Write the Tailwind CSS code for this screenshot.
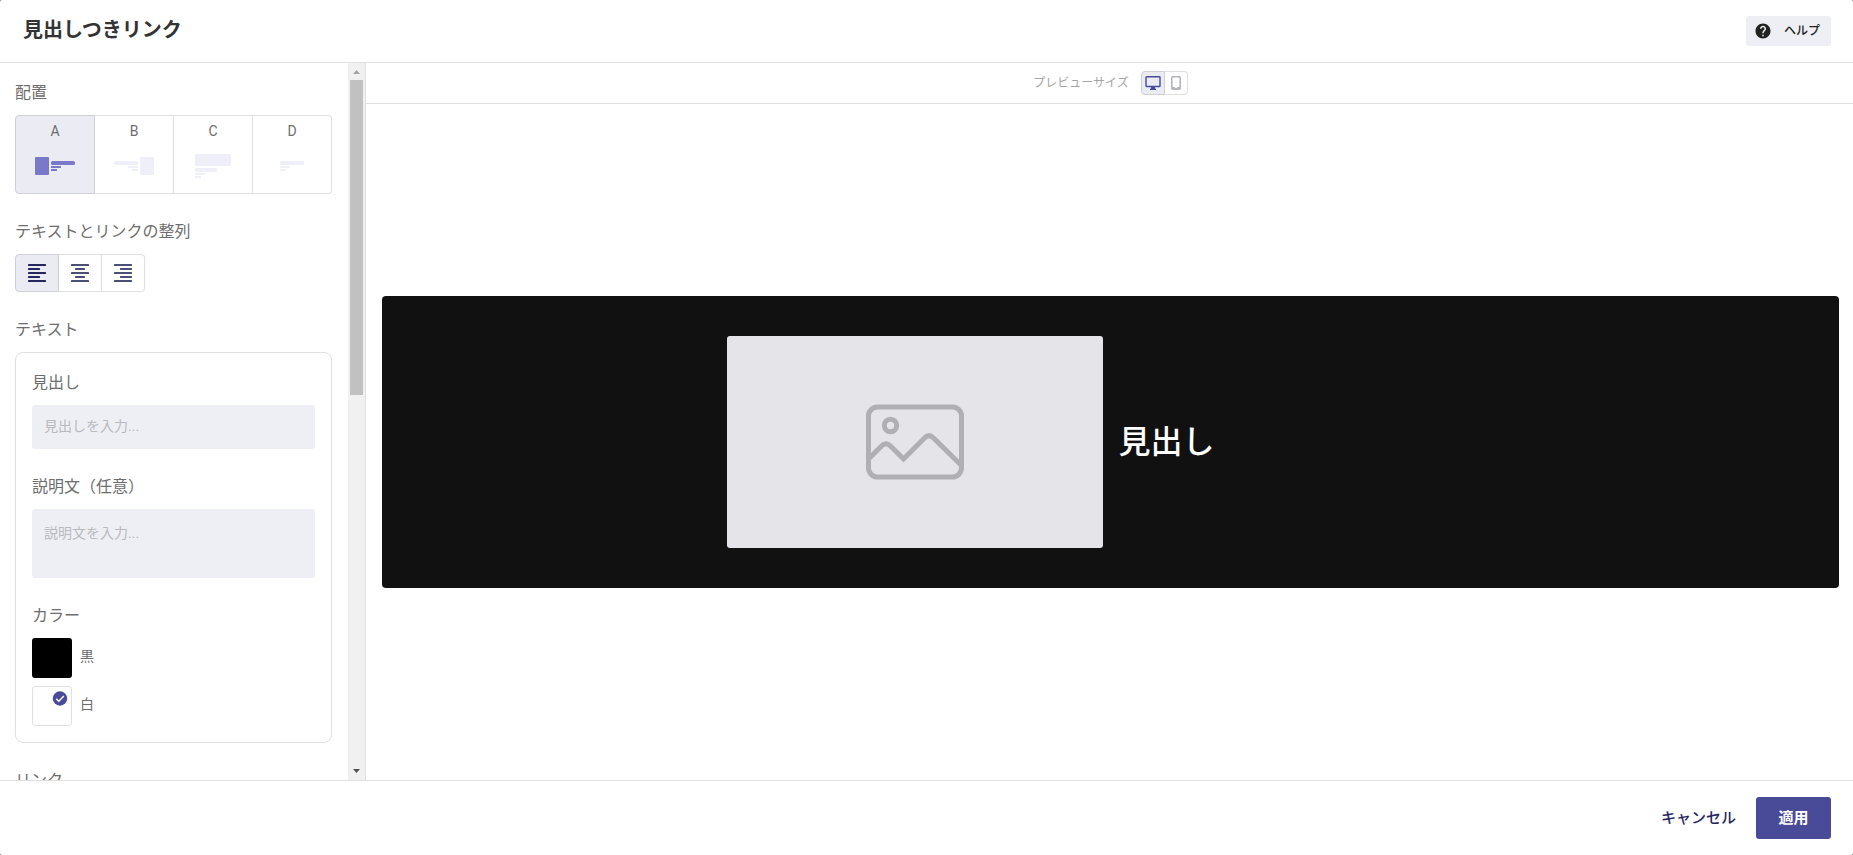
<!DOCTYPE html>
<html lang="ja">
<head>
<meta charset="utf-8">
<title>見出しつきリンク</title>
<script src="https://cdn.jsdelivr.net/npm/@tailwindcss/browser@4"></script>
</head>
<body class="bg-[#777777] font-[Roboto,'Noto_Sans_CJK_JP',sans-serif] text-[#6e6e6e]">
<div class="flex h-screen flex-col overflow-hidden rounded-[2px] bg-white">
  <header class="flex h-[63px] shrink-0 items-center justify-between border-b border-[#e0e0e0] pr-[22px] pl-[23px]">
    <h1 class="pb-[2px] text-xl leading-[30px] font-bold text-[#333333]">見出しつきリンク</h1>
    <button type="button" class="flex h-[30px] items-center gap-3 rounded-[3px] bg-[#eeeff4] pr-[11px] pl-2 text-xs font-medium text-[#222222]">
      <svg class="size-[18px]" viewBox="0 0 24 24" fill="currentColor" aria-hidden="true"><path d="M12 2C6.48 2 2 6.48 2 12s4.480 10 10 10 10-4.480 10-10S17.520 2 12 2zm1 17h-2v-2h2v2zm2.070-7.750l-.9.920C13.450 12.900 13 13.500 13 15h-2v-.5c0-1.100.450-2.100 1.170-2.830l1.240-1.260c.37-.36.590-.86.590-1.410 0-1.100-.9-2-2-2s-2 .9-2 2H8c0-2.210 1.790-4 4-4s4 1.790 4 4c0 .880-.36 1.680-.93 2.250z"/></svg>
      ヘルプ
    </button>
  </header>

  <main class="flex min-h-0 grow">
    <aside class="flex w-[366px] shrink-0 border-r border-[#e0e0e0]">
      <div class="min-w-0 grow overflow-hidden pt-[18px] pr-4 pl-[15px]">
        <section class="mb-[26px]">
          <h2 class="mb-[10px] text-base leading-6">配置</h2>
          <div class="flex h-[79px] text-sm leading-5">
            <button type="button" aria-pressed="true" class="flex grow basis-px flex-col items-center gap-3 rounded-l-[4px] border border-[#cfcfd6] bg-[#ebebf4] pt-[5px]">A
              <svg width="40" height="26" viewBox="0 0 40 26" fill="#7a78c9" aria-hidden="true"><rect y="4" width="14" height="18" rx="1"/><rect x="16" y="8" width="24" height="4" rx="1.5"/><rect x="16" y="13" width="10" height="2" rx=".5"/><rect x="16" y="16" width="6" height="2" rx=".5"/></svg>
            </button>
            <button type="button" aria-pressed="false" class="flex grow basis-px flex-col items-center gap-3 border-y border-r border-[#e0e0e0] pt-[5px]">B
              <svg width="40" height="26" viewBox="0 0 40 26" fill="#efeff9" aria-hidden="true"><rect x="26" y="4" width="14" height="18" rx="1"/><rect y="8" width="24" height="4" rx="1.5"/><rect x="14" y="13" width="10" height="2" rx=".5"/><rect x="18" y="16" width="6" height="2" rx=".5"/></svg>
            </button>
            <button type="button" aria-pressed="false" class="flex grow basis-px flex-col items-center gap-3 border-y border-r border-[#e0e0e0] pt-[5px]">C
              <svg width="36" height="26" viewBox="0 0 36 26" fill="#efeff9" aria-hidden="true"><rect y="1" width="36" height="12" rx="1"/><rect y="15" width="22" height="4" rx="1.5"/><rect y="20" width="10" height="2" rx=".5"/><rect y="23" width="6" height="2" rx=".5"/></svg>
            </button>
            <button type="button" aria-pressed="false" class="flex grow basis-px flex-col items-center gap-3 rounded-r-[4px] border-y border-r border-[#e0e0e0] pt-[5px]">D
              <svg width="24" height="26" viewBox="0 0 24 26" fill="#efeff9" aria-hidden="true"><rect y="8" width="24" height="4" rx="1.5"/><rect y="13" width="10" height="2" rx=".5"/><rect y="16" width="6" height="2" rx=".5"/></svg>
            </button>
          </div>
        </section>

        <section class="mb-[26px]">
          <h2 class="mb-[10px] text-base leading-6">テキストとリンクの整列</h2>
          <div class="flex h-[38px]">
            <button type="button" aria-label="左揃え" aria-pressed="true" class="flex w-11 items-center justify-center rounded-l-[4px] border border-[#cfcfd6] bg-[#ebebf4] text-[#262660]">
              <svg width="18" height="18" viewBox="0 0 18 18" fill="currentColor"><rect width="18" height="2" rx=".5"/><rect y="4" width="12" height="2" rx=".5"/><rect y="8" width="18" height="2" rx=".5"/><rect y="12" width="12" height="2" rx=".5"/><rect y="16" width="18" height="2" rx=".5"/></svg>
            </button>
            <button type="button" aria-label="中央揃え" aria-pressed="false" class="flex w-[43px] items-center justify-center border-y border-r border-[#e0e0e0] text-[#4c5076]">
              <svg width="18" height="18" viewBox="0 0 18 18" fill="currentColor"><rect width="18" height="2" rx=".5"/><rect x="4" y="4" width="10" height="2" rx=".5"/><rect y="8" width="18" height="2" rx=".5"/><rect x="4" y="12" width="10" height="2" rx=".5"/><rect y="16" width="18" height="2" rx=".5"/></svg>
            </button>
            <button type="button" aria-label="右揃え" aria-pressed="false" class="flex w-[43px] items-center justify-center rounded-r-[4px] border-y border-r border-[#e0e0e0] text-[#4c5076]">
              <svg width="18" height="18" viewBox="0 0 18 18" fill="currentColor"><rect width="18" height="2" rx=".5"/><rect x="6" y="4" width="12" height="2" rx=".5"/><rect y="8" width="18" height="2" rx=".5"/><rect x="6" y="12" width="12" height="2" rx=".5"/><rect y="16" width="18" height="2" rx=".5"/></svg>
            </button>
          </div>
        </section>

        <section class="mb-[26px]">
          <h2 class="mb-[10px] text-base leading-6">テキスト</h2>
          <div class="rounded-lg border border-[#e0e0e0] px-4 pt-[18px] pb-4">
            <label for="heading" class="mb-[10px] block text-base leading-6">見出し</label>
            <input id="heading" type="text" placeholder="見出しを入力..." class="mb-[26px] block h-11 w-full rounded-[3px] bg-[#eeeff4] px-3 pb-[2px] text-sm placeholder:text-[#b9b9bd]">
            <label for="description" class="mb-[10px] block text-base leading-6">説明文（任意）</label>
            <textarea id="description" placeholder="説明文を入力..." class="mb-[26px] block h-[69px] w-full resize-none rounded-[3px] bg-[#eeeff4] px-3 py-[14px] text-sm placeholder:text-[#b9b9bd]"></textarea>
            <fieldset>
              <legend class="mb-[10px] text-base leading-6">カラー</legend>
              <div class="flex flex-col gap-2 text-sm">
                <label class="flex items-center gap-2">
                  <input type="radio" name="color" class="size-10 appearance-none rounded-[3px] bg-black">
                  <span class="pb-1">黒</span>
                </label>
                <label class="relative flex items-center gap-2">
                  <input type="radio" name="color" checked class="size-10 appearance-none rounded-[3px] border border-[#e0e0e0] bg-white">
                  <svg class="absolute top-1 left-5 size-4" viewBox="0 0 16 16" aria-hidden="true"><circle cx="8" cy="8.500" r="7.200" fill="#4a4b98"/><path d="M4.200 8.700l2.600 2.600 5.100-5.200" fill="none" stroke="#fff" stroke-width="1.400"/></svg>
                  <span class="pb-1">白</span>
                </label>
              </div>
            </fieldset>
          </div>
        </section>

        <section>
          <h2 class="text-base leading-6">リンク</h2>
        </section>
      </div>
      <div class="flex w-[17px] shrink-0 flex-col items-center bg-[#f1f1f1]" aria-hidden="true">
        <svg class="shrink-0" width="17" height="17" viewBox="0 0 17 17" fill="#a3a3a3"><path d="M5 11h7L8.500 7z"/></svg>
        <div class="h-[315px] w-[13px] shrink-0 bg-[#c1c1c1]"></div>
        <svg class="mt-auto shrink-0" width="17" height="17" viewBox="0 0 17 17" fill="#505050"><path d="M5 6h7l-3.500 4z"/></svg>
      </div>
    </aside>

    <section class="flex min-w-0 grow flex-col">
      <div class="flex h-[41px] shrink-0 items-center justify-center gap-3 border-b border-[#e0e0e0] pl-[2px]">
        <span class="text-xs text-[#a5a5a5]">プレビューサイズ</span>
        <div class="flex h-6">
          <button type="button" aria-label="デスクトップ" aria-pressed="true" class="flex w-6 items-center justify-center rounded-l-[4px] border border-[#cfcfd6] bg-[#ebebf4]">
            <svg width="16" height="14" viewBox="0 0 16 14" aria-hidden="true"><rect x="1" y=".8" width="14" height="9.700" rx=".6" fill="none" stroke="#4a4b98" stroke-width="1.400"/><path d="M6 11h4v1.300l1 .6v1H5v-1l1-.6z" fill="#4a4b98"/></svg>
          </button>
          <button type="button" aria-label="モバイル" aria-pressed="false" class="flex w-[23px] items-center justify-center rounded-r-[4px] border-y border-r border-[#e0e0e0]">
            <svg width="10" height="14" viewBox="0 0 10 14" aria-hidden="true"><rect x=".8" y=".7" width="8.400" height="12.600" rx="1.300" fill="none" stroke="#b5b5b9" stroke-width="1.600"/><path d="M1 11h3v1h2v-1h3v2H1z" fill="#b5b5b9"/></svg>
          </button>
        </div>
      </div>
      <div class="flex grow items-center pr-[14px] pl-4">
        <div class="flex grow justify-center rounded-[4px] bg-[#111111] p-10">
          <div class="grid w-full max-w-3xl grid-cols-2 items-center gap-4">
            <div class="flex h-[212px] items-center justify-center rounded-[3px] bg-[#e5e4e9]">
              <svg width="98" height="76" viewBox="0 0 98 76" fill="none" stroke="#b0afb4" stroke-width="5" aria-hidden="true"><rect x="2.500" y="3" width="93" height="70" rx="9"/><circle cx="24.500" cy="21.500" r="6.200"/><path d="M3 54.500L15.500 42q4.500-4.500 9 0L37.500 55 58.500 34q4.500-4.500 9 0L96 62"/></svg>
            </div>
            <p class="text-[32px] leading-[48px] font-medium text-white">見出し</p>
          </div>
        </div>
      </div>
    </section>
  </main>

  <footer class="flex h-[75px] shrink-0 items-center justify-end gap-5 border-t border-[#e0e0e0] pr-[22px]">
    <button type="button" class="text-[15px] font-medium text-[#262660]">キャンセル</button>
    <button type="button" class="h-[42px] w-[75px] rounded-[3px] bg-[#4a4b98] text-[15px] font-bold text-white">適用</button>
  </footer>
</div>
</body>
</html>
